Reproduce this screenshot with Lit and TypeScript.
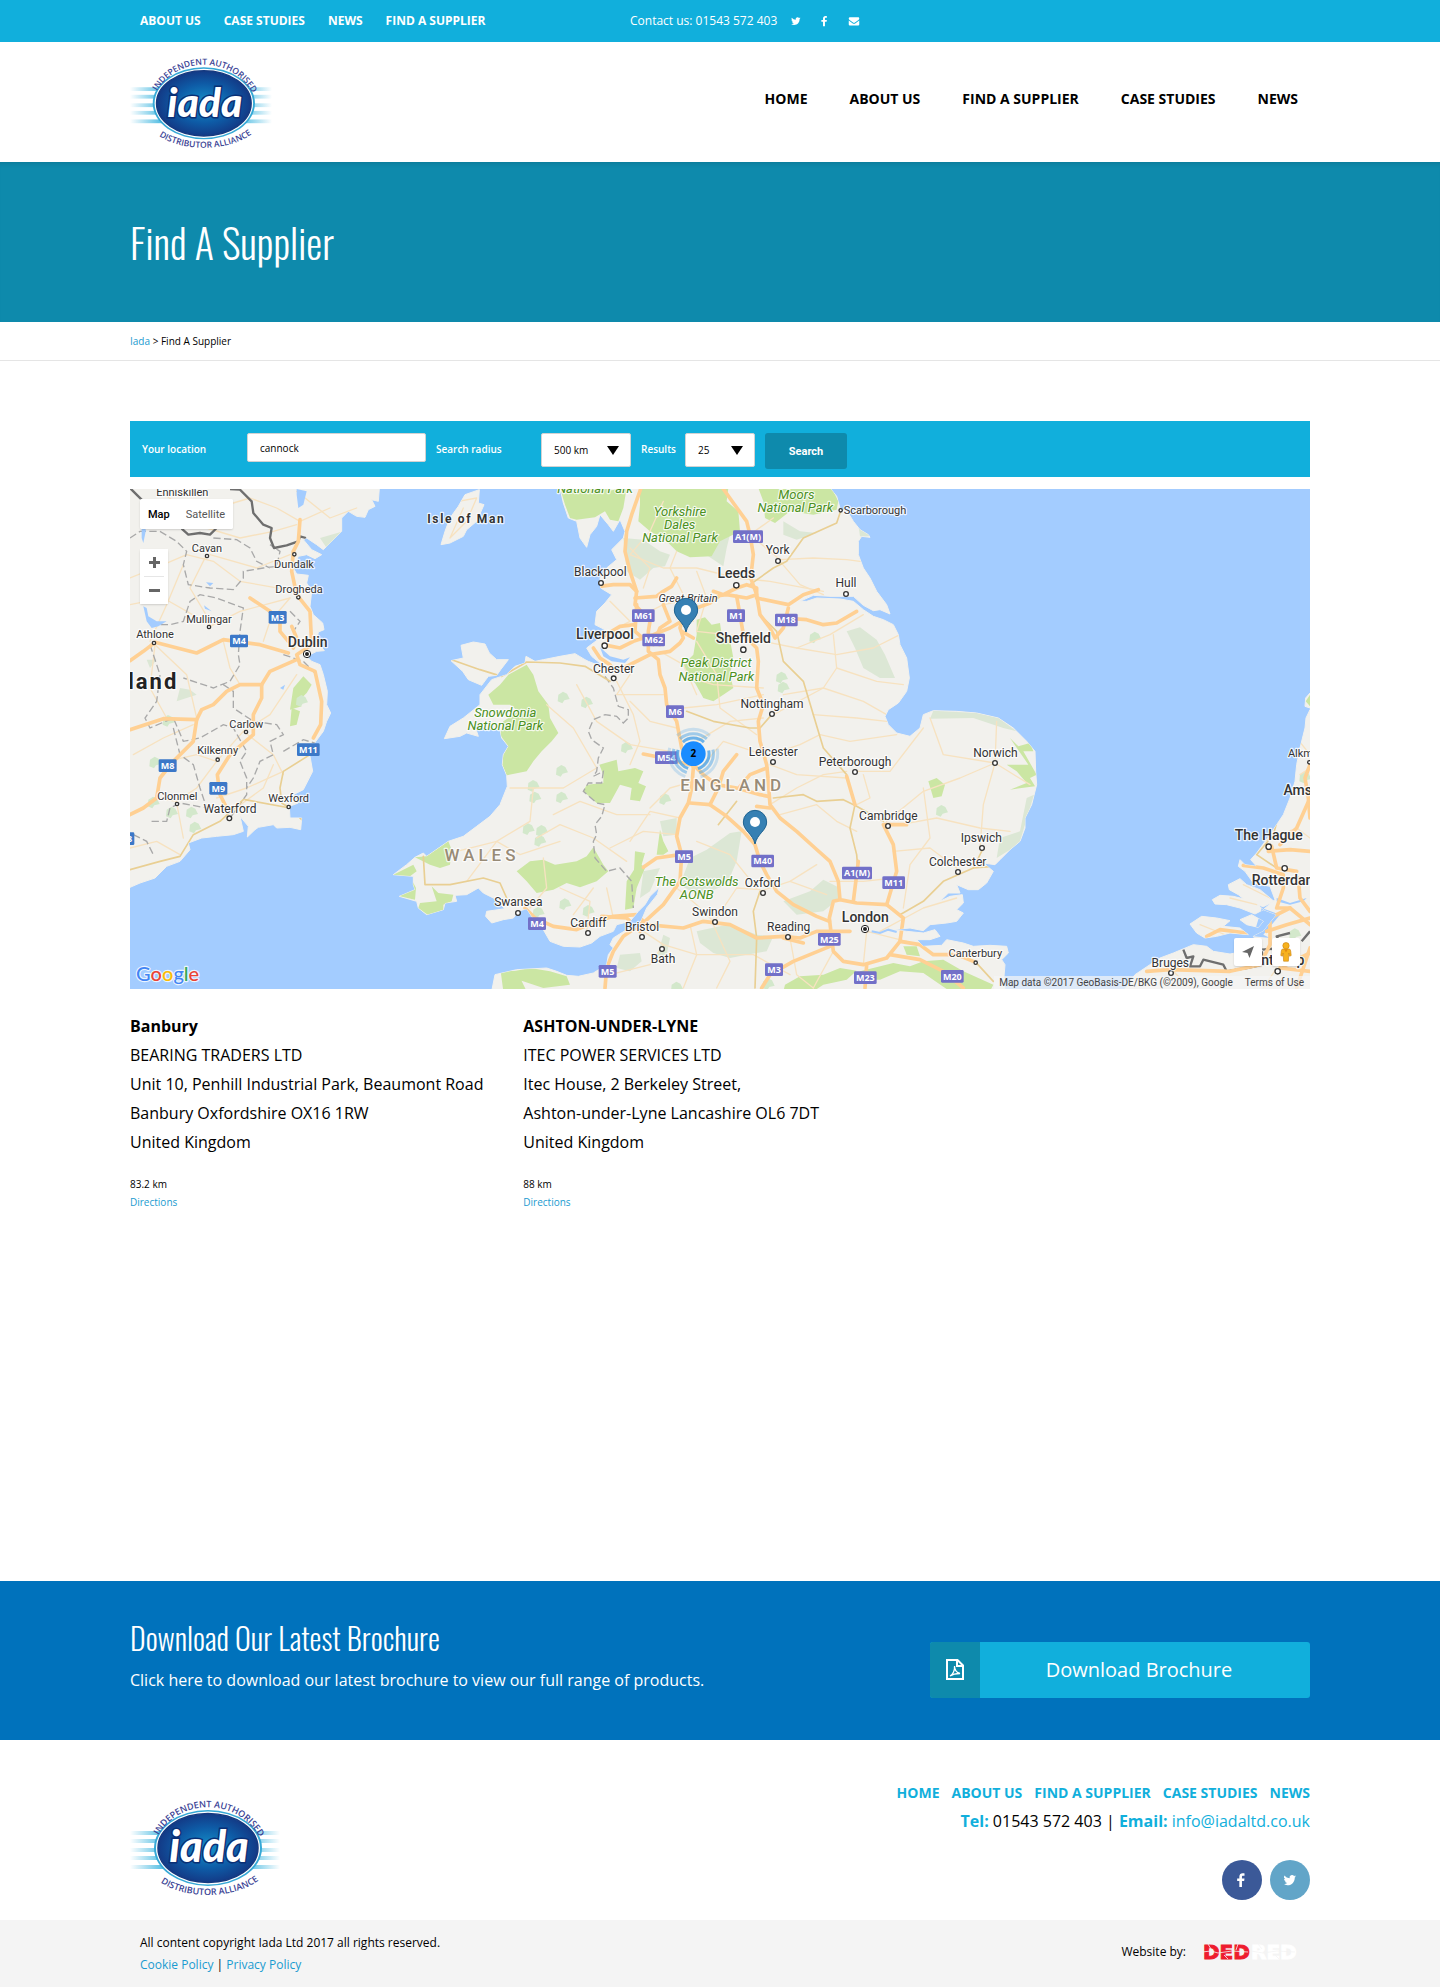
import { LitElement, html, svg, css } from 'lit';
import { customElement, property } from 'lit/decorators.js';

/* ---------- icons ---------- */
const TWITTER =
  'M28 8.6a10 10 0 0 1-2.5 2.6v.7c0 6.8-5.100 14.600-14.600 14.600A14.400 14.400 0 0 1 3 24.200a10.400 10.400 0 0 0 7.600-2.100 5.100 5.100 0 0 1-4.800-3.600 5.400 5.400 0 0 0 2.300-.1 5.100 5.100 0 0 1-4.100-5.100 5.100 5.100 0 0 0 2.300.7 5.100 5.100 0 0 1-1.600-6.900 14.600 14.600 0 0 0 10.600 5.400 5.100 5.100 0 0 1 8.800-4.700 10 10 0 0 0 3.300-1.300 5.100 5.100 0 0 1-2.300 2.900 10.300 10.300 0 0 0 2.900-.8z';
const FACEBOOK = 'M21 3v4.500h-2.700c-2 0-2.400 1-2.400 2.400V13H21l-.7 5h-4.400v12h-5.200V18H6.300v-5h4.400V9.300C10.700 5 13.400 2.700 17.200 2.700c1.800 0 3.400.1 3.800.3z';
const MAIL =
  'M2 9.500c0-2 1.200-3.500 3.200-3.500h21.600c1.800 0 3.200 1.500 3.200 3.200 0 2.100-1.600 4-3.200 5.100l-8.200 5.700c-1.100.8-1.700 1.200-2.600 1.200s-1.500-.4-2.600-1.200l-8.200-5.700C3.700 13.300 2 11.300 2 9.500zM2 14.700c.6.600 1.200 1.100 1.900 1.600l8 5.600c1.300.9 2.600 1.700 4.100 1.700s2.800-.8 4.100-1.700l8-5.600c.7-.5 1.300-1 1.900-1.600V25.500a2.800 2.800 0 0 1-2.800 2.800H4.800A2.800 2.800 0 0 1 2 25.500z';

const icon = (d: string) => html`<svg class="icon" viewBox="0 0 32 32" aria-hidden="true"><path d=${d} /></svg>`;

/* ---------- logo ---------- */
@customElement('iada-logo')
class IadaLogo extends LitElement {
  static styles = css`
    :host { display: block; }
    svg { display: block; width: 100%; height: auto; overflow: visible; }
    .ring { font: 600 9px 'Open Sans', sans-serif; fill: #3a3f94; }
    .word { font: italic 900 43px Lato, 'Open Sans', sans-serif; paint-order: stroke; }
  `;
  render() {
    return html`
      <svg viewBox="0 0 150 98" role="img" aria-label="iada">
        <defs>
          <radialGradient id="g"><stop offset="0" stop-color="#1593cb" /><stop offset=".6" stop-color="#0e5ba6" /><stop offset="1" stop-color="#133a86" /></radialGradient>
          <linearGradient id="l"><stop offset="0" stop-color="#2fb0dd" stop-opacity="0" /><stop offset=".2" stop-color="#2fb0dd" /><stop offset=".8" stop-color="#2fb0dd" /><stop offset="1" stop-color="#2fb0dd" stop-opacity="0" /></linearGradient>
          <path id="top" d="M25 45 C43 -3 114 -3 133 47" />
          <path id="bot" d="M25 80 C50 103 108 103 134 78" />
        </defs>
        ${[33, 41, 50, 58, 67].map((y) => svg`<rect x="0" y=${y} width="150" height="4" fill="url(#l)" opacity=".75" />`)}
        <ellipse cx="78" cy="50" rx="54" ry="38" fill="#35a8d6" />
        <ellipse cx="78" cy="50" rx="52" ry="36.500" fill="#fff" />
        <ellipse cx="78" cy="50" rx="50" ry="34.500" fill="url(#g)" stroke="#163a80" stroke-width="1.500" />
        <text class="word" x="79" y="64" text-anchor="middle" fill="#fff" stroke="#0a2f75" stroke-width="3">iada</text>
        <text class="ring"><textPath href="#top" startOffset="50%" text-anchor="middle">INDEPENDENT AUTHORISED</textPath></text>
        <text class="ring"><textPath href="#bot" startOffset="50%" text-anchor="middle">DISTRIBUTOR ALLIANCE</textPath></text>
      </svg>
    `;
  }
}

/* ---------- map ---------- */
/* Map units are thirds of a pixel, so the geometry stays in whole numbers. */
const WATER = '#a3ccff';

const LAND = [
  /* Ireland */
  'M0 0H748L745 40 725 35 735 55 715 65 705 88 680 85 655 70 635 90V130L600 165 580 185 560 170 530 150 520 155 545 185 575 200 555 212 530 200 505 205 490 240 500 258 535 262 530 285 545 310 540 355 550 380 578 405 582 425 565 432 560 460 583 488 560 490 530 505 545 520 570 530 580 560 592 610 590 650 602 675 590 700 580 730 550 770 540 805 548 850 520 905 490 920 505 945 478 955 480 990 515 990 512 1025 480 1018 440 1020 430 1010 385 1018 375 1025 352 1047 355 1015 330 985 340 1030 310 1040 260 1045 215 1050 175 1065 180 1085 150 1120 110 1135 75 1170 30 1185 0 1198Z',
  /* Isle of Man */
  'M1048 5 1005 20 985 55 960 90 945 130 933 170 960 165 1000 145 1010 125 1040 100 1062 50 1045 45Z',
  /* Anglesey */
  'M963 518 1000 510 993 472 1030 462 1065 468 1078 495 1100 515 1135 515 1112 545 1100 562 1075 565 1055 592 1015 575 998 550Z',
  /* Great Britain */
  'M1290 0 1300 45 1315 90 1340 100 1350 150 1370 178 1380 140 1400 115 1410 80 1435 110 1450 130 1470 95 1485 130 1480 150 1445 185 1460 215 1430 240 1410 270 1412 300 1445 320 1425 345 1400 370 1395 410 1425 425 1410 450 1370 480 1385 505 1410 525 1440 550 1400 530 1375 520 1365 515 1335 497 1290 505 1240 515 1215 520 1188 505 1185 525 1155 535 1130 560 1085 575 1050 620V650L1000 690 960 715 943 752 990 745 1010 735 1045 745 1035 715 1070 720 1110 725 1115 750 1135 775 1120 800 1117 830 1130 862 1132 895 1110 950 1080 985 1040 1015 1000 1045 955 1060 890 1105 880 1095 855 1108 830 1130 790 1160 850 1165V1190L855 1205 808 1225 860 1240 865 1260 890 1280 940 1265 945 1245 980 1240 975 1222 1010 1220 1045 1200 1060 1215 1090 1230 1125 1262 1070 1270 1067 1285 1085 1305 1120 1295 1150 1290 1165 1270 1190 1262 1205 1285 1240 1325 1260 1360 1300 1375 1350 1377 1385 1365 1410 1345 1450 1330 1460 1310 1500 1300 1525 1270 1545 1250 1560 1225 1588 1198 1582 1220 1550 1260 1535 1295 1520 1320 1490 1325 1450 1350 1440 1370 1450 1380 1435 1400 1430 1430 1390 1455 1345 1465 1310 1462 1280 1450 1250 1440 1160 1445 1095 1460 1085 1510H2625L2622 1465 2625 1430 2615 1415 2635 1395 2630 1375 2580 1372 2530 1375 2500 1365 2450 1355 2435 1372 2380 1375 2360 1355 2400 1355 2430 1345 2415 1325 2380 1335 2330 1330 2290 1325 2340 1320 2380 1328 2400 1310 2450 1305 2480 1300 2500 1275 2480 1265 2500 1245 2497 1220 2460 1225 2430 1240 2455 1215 2490 1215 2480 1190 2515 1205 2545 1205 2570 1185 2590 1150 2560 1125 2595 1130 2610 1115 2640 1085 2670 1060 2685 1020V990L2705 950 2720 890 2717 850 2715 790 2690 760 2650 720 2605 690 2540 675 2480 670 2410 668 2380 680 2370 720 2340 745 2300 735 2275 710 2265 685 2275 665 2305 645 2330 610 2338 570 2330 510 2310 470 2305 440 2290 410 2260 395 2230 385 2200 365 2170 340 2130 333 2060 330 2030 340 2010 340 2050 322 2100 325 2170 325 2200 352 2230 368 2250 365 2280 378 2270 350 2240 310 2220 270 2200 240 2185 200V160L2195 145 2220 148 2215 140 2190 125 2170 100 2155 75 2130 60 2120 25 2100 0Z',
  /* The Low Countries */
  'M3540 665 3528 690 3525 720 3510 780 3500 830 3495 880 3480 930 3460 980 3420 1040 3380 1095 3362 1115 3380 1135 3345 1130 3330 1115 3325 1135 3345 1150 3370 1185 3420 1195 3435 1235 3400 1265 3440 1280 3400 1330 3370 1345 3400 1390 3330 1392 3300 1398 3250 1390 3230 1375 3190 1370 3130 1395 3090 1410 3060 1430 3015 1460 2980 1510H3540Z',
  'M3247 1235 3270 1222 3310 1225 3370 1240 3400 1265 3375 1278 3330 1260 3290 1250 3255 1248Z',
  'M3295 1190 3330 1172 3350 1190 3390 1205 3432 1240 3400 1256 3350 1240 3325 1220 3298 1205Z',
  'M3180 1308 3215 1285 3260 1290 3300 1298 3280 1315 3330 1320 3355 1340 3300 1335 3260 1345 3225 1350 3200 1335Z',
  'M3330 1295 3365 1280 3400 1300 3385 1318 3350 1310Z',
  'M3525 655 3527 630 3540 615V660Z',
];

const PARKS = [
  'M1290 0H1490L1480 60 1465 100 1440 95 1425 70 1395 88 1340 95 1320 90 1305 50Z',
  'M1530 0H1795L1790 40 1825 70 1830 130 1770 160 1745 205 1680 208 1640 190 1610 160 1560 130 1525 100 1530 50Z',
  'M1885 0H2105L2125 40 2120 65 2050 80 1980 70 1935 105 1905 90 1900 40Z',
  'M1190 530 1210 560 1225 610 1255 650 1260 690 1285 735 1265 760 1235 790 1210 820 1190 850 1130 862 1117 830 1120 800 1135 775 1110 740 1120 700 1165 670 1140 650 1090 650 1075 620 1110 590 1135 560Z',
  'M1700 395 1725 388 1745 410 1770 405 1775 440 1800 455 1810 510 1800 560 1810 600 1780 620 1750 640 1720 630 1695 585 1670 560 1660 530 1690 500 1700 440Z',
  'M1160 1150 1200 1120 1240 1115 1275 1130 1340 1120 1370 1105 1390 1078 1420 1130 1435 1150 1400 1180 1350 1198 1310 1185 1270 1205 1220 1215 1190 1180Z',
  'M1408 830 1460 815 1465 850 1515 840 1540 850 1525 885 1548 895 1530 940 1500 935 1505 900 1470 890 1440 945 1400 945 1360 910 1370 890 1420 885 1420 860Z',
  'M1590 1025 1600 1060 1615 1090 1600 1100 1580 1100Z',
  'M1515 1090 1545 1095 1535 1130 1545 1140 1520 1200 1510 1260 1485 1265 1490 1180 1512 1145Z',
  'M855 1108 890 1105 955 1060 965 1085 960 1130 930 1140 900 1130ZM790 1160 850 1130 860 1150 840 1165 858 1200 855 1235 810 1225ZM905 1195 925 1215 970 1220 965 1240 940 1250 940 1265 895 1282 865 1260 870 1245 920 1240Z',
  'M520 565 545 590 530 615 505 640 515 655 480 665 490 600Z',
  'M485 660 510 670 500 710 480 715Z',
  'M2395 880 2420 870 2445 890 2435 925 2410 930Z',
  'M2640 750 2665 775 2700 765 2710 790 2680 790 2720 860 2700 870 2715 895 2640 905 2690 885 2660 850 2630 830 2695 830Z',
  'M1965 1490 2010 1465 2080 1460 2130 1440 2180 1448 2150 1475 2080 1490 2050 1510H1960ZM2190 1450 2290 1425 2340 1435 2380 1420 2440 1415 2500 1450 2590 1490 2580 1510H2460L2380 1455 2310 1450 2250 1475 2190 1475ZM2320 1375 2360 1375 2370 1405 2330 1400Z',
  'M1150 1450 1200 1440 1260 1450 1310 1465 1320 1490 1240 1500 1150 1470ZM1112 1450 1160 1448 1190 1510H1120Z',
  'M3527 640 3540 620V655Z',
];

const FAINT = [
  'M1480 150 1540 155 1590 190 1620 200 1605 235 1570 240 1530 275 1490 250Z',
  'M1735 205 1770 160 1800 130 1785 110 1810 100 1790 180 1780 235Z',
  'M2150 430 2190 418 2240 455 2265 500 2295 570 2250 570 2200 540 2175 480Z',
  'M1680 1110 1730 1085 1800 1035 1835 1030 1820 1120 1790 1190 1740 1210 1700 1220 1650 1190Z',
  'M1700 1330 1790 1310 1830 1320 1880 1340 1930 1345 1910 1390 1850 1400 1800 1410 1750 1395 1710 1365Z',
  'M1960 1240 2040 1210 2080 1175 2130 1200 2130 1230 2080 1270 2000 1280Z',
  'M1470 1400 1530 1395 1535 1420 1500 1450 1460 1440ZM1600 1340 1620 1350 1610 1400 1580 1410Z',
  'M1590 1000 1640 990 1640 1040 1600 1045ZM1540 1150 1590 1140 1560 1210 1530 1230Z',
  'M2410 668 2540 675 2605 690 2660 730 2620 720 2530 690 2400 692Z',
  'M2670 1060 2700 960 2712 920 2690 930 2670 1030 2610 1050 2600 1110 2640 1085Z',
  'M1960 100 2010 130 2060 135 2000 155 1960 140ZM2185 110 2220 145 2190 145Z',
  'M150 600 180 605 200 620 140 640ZM50 515 80 515 60 540ZM570 150 640 130 620 160 590 180Z',
];

const SPECKS: Array<[number, number]> = [
  [1285, 620], [1355, 635], [1280, 840], [1195, 885], [1200, 920], [1180, 1015], [1220, 1020], [1215, 1050], [1280, 920],
  [1475, 770], [1590, 925], [1290, 1240], [1360, 1260], [2040, 440], [1940, 560], [1945, 590], [2420, 960], [60, 815], [55, 935],
  [100, 690], [170, 965], [180, 1010], [110, 965], [1900, 1480], [1625, 1490], [500, 630], [3480, 1330], [3510, 860], [1210, 1265],
];

const INLETS = [
  'M1410 478 1440 505 1480 515 1500 508 1485 525 1445 520 1420 505Z',
  'M40 355 50 360 55 385 80 400 110 400 85 415 65 420 50 400ZM222 352 245 370 225 362ZM228 283 250 285 240 295ZM35 115 48 125 40 165 35 150ZM500 3 530 10 520 50 505 60 500 20ZM465 590 460 605 450 600Z',
  'M3440 1230 3480 1245 3530 1230 3520 1240 3480 1250 3440 1240ZM3395 1260 3450 1280 3400 1340 3420 1350 3370 1345Z',
];

const MOTORWAYS = [
  'M1532 3 1505 80 1490 130 1485 190 1500 250 1520 310 1515 350 1560 400 1555 430 1555 490 1585 515 1590 560 1605 600 1610 650 1640 700 1655 780 1680 800 1690 840 1685 900 1675 945 1650 990 1640 1045 1655 1100 1650 1180 1600 1250 1545 1300 1480 1345 1450 1390 1430 1440 1425 1500',
  'M1780 3 1810 45 1850 100 1860 140 1870 200 1862 270 1880 320 1890 380 1920 420 1935 450 1960 420 1975 360',
  'M1410 295 1450 290 1500 290 1520 310', 'M1515 330 1580 325 1600 310 1625 295 1640 270',
  'M1750 310 1780 320 1820 300 1850 290 1880 300 1880 320 1850 330 1790 320 1770 322 1740 345 1700 360 1660 380 1650 420 1660 450 1650 465 1620 490 1560 500 1510 525 1470 545',
  'M1820 325 1830 380 1840 440 1880 480 1885 520 1880 600 1900 650 1885 700 1890 760 1910 830 1915 880 1920 950 1950 990 2000 1030 2055 1080 2100 1120 2125 1180 2130 1235 2110 1240 2098 1290 2105 1350 2110 1390 2140 1420 2200 1430 2270 1410 2310 1360 2320 1290 2270 1250 2180 1245 2130 1235',
  'M1880 330 1975 350 2020 320 2065 305', 'M1960 390 2030 395 2080 410 2120 405 2180 370',
  'M1390 480 1410 510 1440 530 1450 545', 'M1420 470 1470 480 1510 460 1570 440 1620 420 1655 400', 'M1520 350 1515 430 1550 460 1590 470', 'M1420 445 1470 415 1515 410', 'M1600 350 1620 400 1590 420 1570 470', 'M1655 430 1690 450',
  'M1540 798 1600 810 1680 830', 'M1690 830 1720 860 1760 890 1820 900 1890 920 1915 925', 'M1820 800 1780 850 1765 900 1740 950 1680 945', 'M1740 950 1790 985 1840 1030 1875 1070 1890 1120 1910 1160 1940 1210 1990 1250 2060 1285 2098 1300',
  'M1830 895 1860 860 1910 840', 'M1880 955 1920 960', 'M1540 1138 1580 1110 1650 1100',
  'M1185 1260 1215 1290 1270 1315 1340 1325 1400 1300 1450 1285 1520 1280 1550 1310 1660 1320 1720 1300 1800 1310 1880 1350 1960 1345 2010 1350 2060 1330 2160 1330',
  'M1415 1285 1490 1290 1530 1330', 'M1960 1350 2020 1365', 'M1895 1500 1920 1460 1990 1420 2100 1375',
  'M2270 1250 2300 1150 2290 1070 2260 1010 2330 1010', 'M2170 1240 2185 1120', 'M2150 865 2175 950',
  'M2310 1360 2370 1370 2410 1400 2480 1400 2530 1420', 'M2280 1400 2370 1415 2440 1450 2500 1500', 'M2210 1430 2205 1500',
  'M360 330 420 370 450 400 450 430 475 460', 'M0 518 40 490 75 463 200 495 280 455 390 470 475 495', 'M0 725 100 692 200 695 215 665 250 650 290 610 330 590 395 590 420 550 500 515',
  'M200 695 190 760 130 820 90 870 80 930 40 960 0 980', 'M395 590 395 630 370 680 370 740 300 800 262 860 270 920 290 960', 'M490 190 485 250 500 320 540 370 545 470 500 500 510 530 555 550 575 640 572 710 550 750',
  'M510 95 505 160 490 190', 'M485 415 500 450 490 480',
  'M3540 830 3525 870 3535 930 3540 990', 'M3425 1075 3440 1140 3500 1150', 'M3415 1090 3480 1085 3540 1090', 'M3340 1132 3400 1140 3460 1160 3460 1200 3440 1260 3480 1260 3540 1310', 'M3505 1170 3510 1230 3540 1270', 'M3480 1260 3420 1290 3420 1370 3390 1430 3300 1450 3120 1445 3050 1450', 'M3230 1345 3270 1325 3350 1335', 'M3540 930 3500 1020 3450 1070', 'M3410 1330 3470 1310 3540 1290', 'M3540 1395 3450 1440 3540 1450', 'M3500 1500 3540 1380',
];

const ROADS = [
  'M965 515 1050 545 1115 565 1190 522 1290 525 1365 535 1440 580', 'M1860 290 1930 240 1970 220 2020 150 2120 105 2135 60', 'M1890 380 1940 430 1960 520 2020 580 2050 680 2080 780 2150 860', 'M1670 670 1750 700 1860 720 1890 720 1925 680',
  'M1930 930 2020 920 2060 940 2140 935 2180 955 2260 1000', 'M2175 950 2160 1020 2180 1100 2185 1160', 'M880 1105 885 1190 960 1190 1060 1170 1110 1185 1130 1230', 'M1765 1010 1820 940', 'M1890 1210 1870 1270 1880 1350 1875 1500', 'M2310 1280 2380 1240 2440 1180 2530 1140 2590 1135', 'M2530 1140 2560 1080', 'M2535 1420 2590 1480', 'M540 800 460 850 450 900 455 945 480 960 515 995', 'M345 935 480 960', 'M0 1145 90 1120 150 1105 190 1040 270 1000 340 935', 'M3460 930 3430 1040 3380 1100 3440 1140',
];

const MINOR = [
  'M1600 40 1560 130 1500 200 1600 240 1700 240 1820 270 1920 280 2080 310', 'M1930 90 1860 140 1950 215 2050 210 2150 215 2190 220', 'M1950 220 2010 290 2080 320', 'M1640 190 1620 240 1660 320 1690 400', 'M1700 250 1730 330 1700 430 1880 450',
  'M1900 460 2000 480 2100 440 2200 380', 'M2000 480 2120 500 2230 480 2310 440', 'M2110 440 2120 540 2080 600 1930 680', 'M2120 540 2240 580 2320 590', 'M1960 620 2080 600 2200 640 2270 680', 'M2050 680 2180 690 2270 700', 'M1920 800 2010 770 2070 740 2160 760 2300 740',
  'M2175 850 2280 850 2380 720', 'M2400 690 2440 800 2595 825 2700 890', 'M2595 825 2600 700', 'M2595 825 2490 870 2380 910 2270 1000', 'M2595 825 2560 950 2550 1080', 'M2310 1010 2420 990 2550 1020 2640 1030', 'M2380 900 2400 1050 2340 1130 2320 1260', 'M2480 1140 2400 1080 2290 1090', 'M2200 860 2220 930 2180 950',
  'M1920 830 2000 860 2150 870', 'M1920 950 2000 900 2080 860 2150 850', 'M1950 980 2060 950 2120 1000 2180 1030', 'M1890 1210 1980 1180 2060 1130', 'M1980 1180 2090 1220', 'M1760 1290 1820 1200 1890 1205', 'M1640 1200 1700 1250 1750 1300', 'M1700 1060 1800 1100 1880 1200', 'M1560 960 1620 900 1690 880', 'M1500 1060 1560 970 1650 990', 'M1440 1080 1540 1030 1640 1040', 'M1500 640 1560 700 1640 720', 'M1460 580 1510 680 1530 760 1500 830', 'M1340 590 1400 700 1500 770 1620 790', 'M1250 650 1330 720 1400 840 1300 900 1140 900', 'M1270 980 1350 940 1460 980 1560 980', 'M1220 1050 1290 1010 1390 1050 1490 1120', 'M1010 1180 1100 1060 1170 1100 1290 1060', 'M1210 900 1200 1000 1100 1060 980 1090', 'M1240 1110 1250 1200 1200 1260', 'M1290 1200 1380 1240 1370 1330', 'M1430 1200 1450 1290', 'M1390 1200 1330 1280', 'M1650 560 1750 590 1900 600', 'M1660 660 1760 650 1900 620', 'M1700 460 1760 560 1770 660 1880 740', 'M1700 760 1800 700 1900 690', 'M1720 830 1780 760 1900 800', 'M1540 1330 1600 1370 1700 1400 1870 1400 1980 1460', 'M1600 1370 1560 1430 1440 1460', 'M1680 1310 1700 1400 1660 1500', 'M1750 1310 1800 1420 1760 1500', 'M1980 1350 2000 1460 2050 1500', 'M2210 1330 2200 1430', 'M2210 1330 2330 1360', 'M2100 1180 2200 1180 2290 1170', 'M2110 1390 2050 1500', 'M2250 1330 2380 1260 2480 1230', 'M1500 180 1560 240 1540 300', 'M1440 340 1500 400 1420 440', 'M1540 380 1600 350 1700 330', 'M1590 490 1660 530 1700 620', 'M1500 560 1460 620 1600 620',
  'M80 3 160 60 230 120 330 150 430 130 500 110', 'M260 60 360 30 440 60 510 100 600 60', 'M500 10 600 90 680 60', 'M0 270 100 230 170 200 250 220 330 280 500 310', 'M60 460 110 350 160 230', 'M240 415 330 370 480 330', 'M0 350 100 330 240 410', 'M75 470 60 600 110 690', 'M75 470 170 560 200 690', 'M280 460 300 540 330 590', 'M10 800 100 750 190 710', 'M110 820 200 800 260 820 340 730', 'M260 820 200 900 140 940 80 930', 'M340 730 420 680 500 560', 'M340 730 430 800 460 860', 'M260 930 350 900 460 850', 'M0 1080 80 1060 150 1100', 'M140 945 160 1050', 'M290 980 400 900 430 830', 'M230 200 180 300 240 400', 'M480 330 420 400 400 460', 'M480 200 380 240 240 200',
  'M3400 1060 3500 1020 3540 1050', 'M3300 1230 3380 1250', 'M3340 1190 3420 1230', 'M3210 1310 3310 1350', 'M3120 1440 3180 1500', 'M3500 750 3540 800', 'M3510 860 3540 840', 'M3440 1440 3400 1500', 'M985 40 1040 30 1010 100 960 150 1000 60',
];

const COUNTY =
  'M1425 565 1450 600 1465 655 1495 665 1495 690 1480 705 1460 685 1425 680 1390 695 1375 730 1385 755 1420 780 1405 810 1400 850 1390 865 1420 850 1415 885 1375 885 1360 910 1400 945 1425 950 1415 985 1395 1010 1400 1040 1390 1060 1395 1110 1430 1150 1470 1140 1505 1180 1510 1260M0 150 30 130 90 130 140 160 170 190 160 230 175 290 240 300 310 305 340 270 340 250 400 240 440 235 450 190 420 170M250 150 320 155 360 180 380 220 420 240M60 410 120 410 160 400 180 340 210 320 260 330 340 360 330 430 325 500 330 530 300 580 250 600 160 570M60 470 90 560 80 640 45 690 60 720 130 690 160 760 210 750 280 710 310 720 350 790 330 820 350 870 350 920 300 990M130 720 150 800 190 830 210 900 230 960 150 945 120 960 110 1000 60 1000M280 590 310 610 310 660 370 700 440 710 460 740 420 760 430 800 390 820 370 870 350 900M460 790 520 755 570 770M480 370 510 400 490 430M10 1040 50 1060 70 1100M460 500 520 520 560 560';

const BORDER = 'M0 0 50 50M155 122 175 140 210 135 240 140 260 120M300 3 330 5 365 40 370 75 400 110 425 120 420 150 432 180 470 172 505 160 510 145 528 150M3160 1385 3170 1410 3190 1405 3180 1435 3210 1435 3220 1415 3280 1430 3290 1450 3350 1440 3400 1430 3395 1385 3460 1380 3440 1345 3480 1335M3515 1360 3540 1330';

type Place = [string, number, number, number, number];
/* name, label centre x, label baseline y, dot x, dot y */
const TOWNS: Place[] = [
  ['Blackpool', 1411, 264, 1413, 285], ['York', 1943, 199, 1944, 219], ['Hull', 2148, 298, 2148, 318], ['Chester', 1451, 556, 1451, 571],
  ['Nottingham', 1926, 661, 1926, 678], ['Leicester', 1930, 804, 1929, 822], ['Peterborough', 2175, 835, 2175, 852], ['Norwich', 2596, 807, 2595, 825],
  ['Cambridge', 2275, 997, 2274, 1014], ['Ipswich', 2554, 1063, 2556, 1080], ['Colchester', 2483, 1134, 2484, 1152], ['Oxford', 1898, 1197, 1899, 1215],
  ['Swindon', 1755, 1285, 1755, 1302], ['Bristol', 1536, 1330, 1536, 1347], ['Bath', 1599, 1426, 1596, 1383], ['Cardiff', 1375, 1317, 1374, 1335],
  ['Swansea', 1165, 1255, 1164, 1275], ['Reading', 1976, 1330, 1974, 1347], ['Waterford', 300, 975, 298, 991],
  ['Bruges', 3121, 1437, 3123, 1455],
];
const SMALL: Place[] = [
  ['Enniskillen', 157, 23, 0, 0], ['Cavan', 231, 191, 231, 204], ['Dundalk', 492, 239, 493, 199], ['Drogheda', 507, 314, 505, 328], ['Mullingar', 237, 404, 237, 417],
  ['Athlone', 75, 449, 72, 465], ['Carlow', 349, 719, 348, 732], ['Kilkenny', 263, 797, 263, 815], ['Clonmel', 142, 935, 141, 948],
  ['Wexford', 476, 941, 476, 957], ['Scarborough', 2235, 77, 2132, 67], ['Canterbury', 2536, 1406, 2537, 1424], ['Alkmaar', 3535, 808, 3538, 823],
];
const CITIES: Place[] = [
  ['Leeds', 1819, 270, 1819, 292], ['Liverpool', 1425, 453, 1424, 473], ['Sheffield', 1840, 465, 1840, 485], ['Dublin', 533, 477, 531, 498],
  ['London', 2206, 1302, 2205, 1323], ['The Hague', 3416, 1056, 3416, 1076], ['Rotterdam', 3464, 1191, 3464, 1141], ['Amsterdam', 3570, 922, 0, 0], ['Antwerp', 3445, 1431, 3443, 1450],
];
const NATURE: Array<[string, number, number]> = [
  ['National Park', 1395, 16], ['Yorkshire', 1650, 84], ['Dales', 1649, 122], ['National Park', 1650, 161], ['Moors', 1999, 33], ['National Park', 1996, 72],
  ['Snowdonia', 1126, 686], ['National Park', 1126, 725], ['Peak District', 1758, 538], ['National Park', 1759, 578], ['The Cotswolds', 1700, 1193], ['AONB', 1700, 1232],
];
const SHIELDS: Array<[string, number, number, string]> = [
  ['M3', 443, 388, 'ie'], ['M4', 327, 459, 'ie'], ['M11', 535, 785, 'ie'], ['M8', 113, 833, 'ie'], ['M9', 265, 901, 'ie'], ['M8', -14, 1052, 'ie'],
  ['A1(M)', 1854, 146, 'uk'], ['M61', 1540, 383, 'uk'], ['M1', 1818, 383, 'uk'], ['M18', 1969, 396, 'uk'], ['M62', 1571, 456, 'uk'], ['M6', 1635, 671, 'uk'],
  ['M54', 1609, 809, 'uk'], ['M5', 1662, 1106, 'uk'], ['M40', 1898, 1119, 'uk'], ['M4', 1221, 1307, 'uk'], ['M5', 1433, 1450, 'uk'], ['M25', 2098, 1354, 'uk'],
  ['A1(M)', 2181, 1155, 'uk'], ['M11', 2291, 1184, 'uk'], ['M3', 1932, 1445, 'uk'], ['M23', 2206, 1469, 'uk'], ['M20', 2467, 1465, 'uk'],
];

@customElement('supplier-map')
class SupplierMap extends LitElement {
  static styles = css`
    :host { display: block; position: relative; height: 500px; overflow: hidden; font-family: Roboto, 'Liberation Sans', sans-serif; }
    .chart { display: block; width: 100%; height: 100%; background: #a3ccff; }
    text { text-anchor: middle; paint-order: stroke; stroke: #fff; stroke-width: 7; stroke-opacity: .8; stroke-linejoin: round; fill: #333; }
    .town { font-size: 36px; }
    .small { font-size: 33px; }
    .city { font-size: 42px; font-weight: 500; }
    .nature { font-size: 39px; font-style: italic; fill: #4b9022; }
    .note { font-size: 33px; font-style: italic; }
    .island { font-size: 36px; font-weight: 700; letter-spacing: 5px; }
    .nation { font-size: 51px; font-weight: 500; letter-spacing: 12px; fill: #988b77; }
    .country { font-size: 66px; font-weight: 700; letter-spacing: 6px; fill: #222; text-anchor: start; }
    .shield { font: 700 27px 'Open Sans', sans-serif; fill: #fff; stroke: none; }
    .tally { font: 700 30px 'Open Sans', sans-serif; fill: #000; stroke: none; }
    .google { font: 500 60px Lato, sans-serif; text-anchor: start; }
    button { border: 0; padding: 0; background: #fff; font: inherit; cursor: pointer; color: #565656; }
    .modes, .zoom, .locate, .pegman { position: absolute; background: #fff; border-radius: 2px; box-shadow: 0 1px 2px rgba(0, 0, 0, .15); }
    .modes { left: 10px; top: 10px; display: flex; height: 30px; font-size: 11px; }
    .modes button { padding: 0 8px; border-radius: 2px; }
    .modes .on { color: #000; font-weight: 500; }
    .zoom { left: 10px; top: 60px; width: 28px; display: grid; grid-template-rows: 27px 1px 27px; }
    .zoom span { background: #e6e6e6; margin: 0 4px; }
    .zoom svg, .locate svg, .pegman svg { display: block; margin: auto; }
    .locate, .pegman { width: 28px; height: 28px; bottom: 23px; }
    .locate { right: 48px; }
    .pegman { right: 10px; }
    .legal { position: absolute; right: 0; bottom: 0; display: flex; gap: 12px; padding: 0 6px 0 5px; background: rgba(245, 245, 245, .7); font-size: 10px; line-height: 13px; color: #444; }
    .legal a { color: #444; text-decoration: none; }
  `;

  private places(list: Place[], cls: string, r: number) {
    return list.map(
      ([name, x, y, dx, dy]) => svg`
        ${dx ? svg`<circle cx=${dx} cy=${dy} r=${r} fill="#fff" stroke="#333" stroke-width="4" />` : ''}
        <text class=${cls} x=${x} y=${y}>${name}</text>`,
    );
  }

  private paths(list: string[], stroke: string, width: number) {
    return svg`<g fill="none" stroke=${stroke} stroke-width=${width} stroke-linejoin="round" stroke-linecap="round">${list.map((d) => svg`<path d=${d} />`)}</g>`;
  }

  private pin(x: number, y: number) {
    return svg`<g transform="translate(${x} ${y})">
      <path d="M0 0C-7-32-35-40-35-66A35 35 0 0 1 35-66C35-40 7-32 0 0Z" fill="#3680b3" stroke="#1f6391" stroke-width="3" />
      <circle cy="-66" r="15" fill="#fff" /></g>`;
  }

  private cluster(x: number, y: number) {
    const ring = (r: number, o: number) =>
      svg`<circle r=${r} fill="none" stroke="#4ba3e6" stroke-width="9" stroke-opacity=${o} pathLength="360" stroke-dasharray="84 36" transform="rotate(-132)" />`;
    return svg`<g transform="translate(${x} ${y})">${ring(47, 0.8)}${ring(60, 0.5)}${ring(73, 0.25)}
      <circle r="37" fill="#1a8cff" /><text class="tally" y="11">2</text></g>`;
  }

  render() {
    return html`
      <svg class="chart" viewBox="0 3 3540 1500" preserveAspectRatio="xMidYMid slice" role="img" aria-label="Map of suppliers">
        <defs><clipPath id="land">${LAND.map((d) => svg`<path d=${d} />`)}</clipPath></defs>
        <g fill="#f2f1ed" stroke="#f2f1ed" stroke-width="3" stroke-linejoin="round">${LAND.map((d) => svg`<path d=${d} />`)}</g>
        <g clip-path="url(#land)">
          <g fill="#dce7d5">${FAINT.map((d) => svg`<path d=${d} />`)}</g>
          <g fill="#cbe6a3">${PARKS.map((d) => svg`<path d=${d} />`)}</g>
          <g fill="#d3e8cb">${SPECKS.map(([x, y]) => svg`<path d="M${x} ${y}l14-9 12 6 8 16-16 4-6 9-14-6z" />`)}</g>
          ${this.paths(MINOR, '#f7e2c0', 4)}
          <path d=${COUNTY} fill="none" stroke="#a9a9a9" stroke-width="4" stroke-dasharray="22 10" />
          <path d=${BORDER} fill="none" stroke="#6e6e6e" stroke-width="7" stroke-linejoin="round" />
          <g fill=${WATER}>${INLETS.map((d) => svg`<path d=${d} />`)}</g>
          ${this.paths(ROADS, '#e9cf93', 5)}
          ${this.paths(MOTORWAYS, '#ffd093', 11)}
        </g>
        <path d="M2225 1330 2250 1335 2275 1325 2300 1332" fill="none" stroke=${WATER} stroke-width="6" />
        <text class="island" x="1009" y="105">Isle of Man</text>
        <text class="nation" x="1056" y="1119">WALES</text>
        <text class="nation" x="1808" y="909">ENGLAND</text>
        <text class="country" x="-6" y="603">land</text>
        <text class="note" x="1674" y="341">Great Britain</text>
        ${NATURE.map(([t, x, y]) => svg`<text class="nature" x=${x} y=${y}>${t}</text>`)}
        ${this.places(SMALL, 'small', 5)} ${this.places(TOWNS, 'town', 7)} ${this.places(CITIES, 'city', 8)}
        ${[[531, 498], [2205, 1323]].map(([x, y]) => svg`<circle cx=${x} cy=${y} r="11" fill="#fff" stroke="#222" stroke-width="3" /><circle cx=${x} cy=${y} r="6" fill="#222" />`)}
        ${SHIELDS.map(([t, x, y, k]) => {
          const w = t.length > 3 ? 90 : t.length > 2 ? 68 : 54;
          return svg`<rect x=${x - w / 2} y=${y - 19} width=${w} height="38" rx="4" fill=${k === 'ie' ? '#3c78c8' : '#7270c8'} />
            <text class="shield" x=${x} y=${y + 10}>${t}</text>`;
        })}
        ${this.cluster(1690, 797)} ${this.pin(1668, 432)} ${this.pin(1875, 1068)}
        <text class="google" x="18" y="1480"><tspan fill="#4285f4">G</tspan><tspan fill="#ea4335">o</tspan><tspan fill="#fbbc05">o</tspan><tspan fill="#4285f4">g</tspan><tspan fill="#34a853">l</tspan><tspan fill="#ea4335">e</tspan></text>
      </svg>
      <div class="modes"><button class="on" type="button">Map</button><button type="button">Satellite</button></div>
      <div class="zoom">
        <button type="button" aria-label="Zoom in"><svg width="11" height="11" viewBox="0 0 11 11"><path d="M4 0h3v4h4v3H7v4H4V7H0V4h4z" fill="#666" /></svg></button>
        <span></span>
        <button type="button" aria-label="Zoom out"><svg width="11" height="3" viewBox="0 0 11 3"><path d="M0 0h11v3H0z" fill="#666" /></svg></button>
      </div>
      <button class="locate" type="button" aria-label="My location"><svg width="12" height="12" viewBox="0 0 12 12"><path d="M12 0 7.500 12 5.500 7 0 6z" fill="#666" /></svg></button>
      <button class="pegman" type="button" aria-label="Street View">
        <svg width="12" height="20" viewBox="0 0 12 20"><path d="M3 7h6q1.500 0 1.700 2l.5 4.500-1.600.7-.8-3.200-.4 8.200H3.600L3.200 11l-.8 3.200-1.600-.7L1.300 9Q1.500 7 3 7z" fill="#f7b21d" stroke="#c98211" stroke-width=".6" /><circle cx="6" cy="3.700" r="3.200" fill="#f7b21d" stroke="#c98211" stroke-width=".6" /><path d="M4.200 7.300h3.600L6 10.500z" fill="#e08a10" /></svg>
      </button>
      <div class="legal"><span>Map data ©2017 GeoBasis-DE/BKG (©2009), Google</span><a href="#terms">Terms of Use</a></div>
    `;
  }
}

/* ---------- supplier entry ---------- */
interface Supplier { town: string; lines: string[]; distance: string; }

@customElement('supplier-entry')
class SupplierEntry extends LitElement {
  @property({ attribute: false }) supplier!: Supplier;
  static styles = css`
    :host { display: block; }
    address { font-style: normal; font-size: 16px; line-height: 29px; }
    strong, span { display: block; }
    .meta { margin: 18px 0 0; font-size: 10px; line-height: 18px; }
    a { display: block; color: #1a9bd0; text-decoration: none; }
  `;
  render() {
    const s = this.supplier;
    return html`<address><strong>${s.town}</strong>${s.lines.map((l) => html`<span>${l}</span>`)}</address>
      <p class="meta">${s.distance}<a href="#directions">Directions</a></p>`;
  }
}

const SUPPLIERS: Supplier[] = [
  { town: 'Banbury', lines: ['BEARING TRADERS LTD', 'Unit 10, Penhill Industrial Park, Beaumont Road', 'Banbury Oxfordshire OX16 1RW', 'United Kingdom'], distance: '83.2 km' },
  { town: 'ASHTON-UNDER-LYNE', lines: ['ITEC POWER SERVICES LTD', 'Itec House, 2 Berkeley Street,', 'Ashton-under-Lyne Lancashire OL6 7DT', 'United Kingdom'], distance: '88 km' },
];
const TOP_LINKS = ['ABOUT US', 'CASE STUDIES', 'NEWS', 'FIND A SUPPLIER'];
const MAIN_LINKS = ['HOME', 'ABOUT US', 'FIND A SUPPLIER', 'CASE STUDIES', 'NEWS'];
const href = (t: string) => '#' + t.toLowerCase().replace(/ /g, '-');

/* ---------- page ---------- */
@customElement('app-root')
class AppRoot extends LitElement {
  static styles = css`
    :host { display: block; background: #fff; color: #000; font-family: 'Open Sans', 'Liberation Sans', sans-serif; }
    * { box-sizing: border-box; }
    a { color: inherit; text-decoration: none; }
    h1, h2, p { margin: 0; }
    h1, h2 { font-family: Oswald, 'Liberation Sans Narrow', 'Open Sans', sans-serif; font-weight: 300; }
    .wrap { max-width: 1180px; margin: 0 auto; }
    .icon { display: block; width: 12px; height: 12px; fill: currentColor; }

    .topbar { background: #11afdc; color: #fff; font-size: 12px; line-height: 42px; }
    .topbar .wrap { display: grid; grid-template-columns: 500px 1fr; }
    .toplinks { display: flex; gap: 23px; padding-left: 10px; font-weight: 700; }
    .contact { display: flex; align-items: center; }
    .contact span { margin-right: 13px; }
    .contact a { margin-right: 17px; }

    .header { display: flex; justify-content: space-between; align-items: center; height: 120px; }
    .header iada-logo { width: 142px; }
    .mainnav { display: flex; gap: 42px; padding: 0 12px 6px 0; font-size: 14px; font-weight: 700; line-height: 20px; }

    .banner { background: #0e8aac; color: #fff; box-shadow: inset 0 5px 5px -4px rgba(0, 0, 0, .15); }
    .banner h1 { padding: 52px 0; font-size: 40px; line-height: 56px; }
    .crumbs { border-bottom: 1px solid #e5e5e5; font-size: 10px; line-height: 38px; }
    .crumbs a { color: #1a9bd0; }

    .search { display: flex; align-items: flex-start; margin: 60px 0 12px; padding: 12px 12px 8px; background: #11afdc; color: #fff; font-size: 10px; font-weight: 600; }
    .search label { line-height: 32px; }
    .wide { width: 105px; }
    .narrow { width: 44px; }
    .search input, .search select { border: 1px solid #d2d2d2; border-radius: 2px; background: #fff; color: #000; font: 400 10px 'Open Sans', sans-serif; margin: 0; }
    .search input { width: 179px; height: 29px; padding: 0 12px; margin-right: 10px; }
    .pick { display: grid; align-items: center; margin-right: 10px; height: 34px; }
    .pick > * { grid-area: 1 / 1; }
    .pick svg { justify-self: end; margin-right: 12px; pointer-events: none; z-index: 1; }
    .search select { appearance: none; height: 34px; padding: 0 12px; }
    .search .radius { width: 90px; }
    .search .count { width: 70px; }
    .search button { width: 82px; height: 36px; border: 0; border-radius: 3px; background: #0e8aac; color: #fff; font: 700 11px Roboto, sans-serif; }

    .results { display: grid; grid-template-columns: repeat(3, 1fr); align-items: start; min-height: 592px; padding-top: 23px; }

    .cta { background: #0072bc; color: #fff; }
    .cta .wrap { display: flex; justify-content: space-between; align-items: center; height: 159px; }
    .cta h2 { font-size: 30px; line-height: 44px; }
    .cta p { font-size: 16px; line-height: 28px; padding-top: 6px; }
    .cta .copy { padding-bottom: 12px; }
    .download { display: grid; grid-template-columns: 50px 330px; align-items: center; height: 56px; margin-top: 18px; border-radius: 3px; overflow: hidden; background: #11afdc; font-size: 20px; text-align: center; }
    .download i { display: grid; place-items: center; height: 56px; background: #0e8aac; }
    .download svg { display: block; }
    .download span { padding-right: 12px; }

    .foot { display: flex; justify-content: space-between; align-items: flex-start; height: 180px; padding-top: 39px; }
    .foot iada-logo { width: 150px; margin-top: 19px; }
    .foot .side { display: flex; flex-direction: column; align-items: flex-end; }
    .footnav { display: flex; gap: 12px; color: #11afdc; font-size: 14px; font-weight: 700; line-height: 28px; }
    .tel { font-size: 16px; line-height: 28px; }
    .tel strong, .tel a { color: #11afdc; }
    .social { display: flex; gap: 8px; margin-top: 25px; }
    .social a { display: grid; place-items: center; width: 40px; height: 40px; border-radius: 50%; color: #fff; }
    .social .icon { width: 16px; height: 16px; }
    .fb { background: #3b5998; }
    .tw { background: #62a5c8; }

    .legal { background: #f4f4f4; font-size: 12px; line-height: 22px; }
    .legal .wrap { display: flex; justify-content: space-between; align-items: center; height: 67px; padding: 0 10px; }
    .legal a { color: #1a9bd0; }
    .credit { display: flex; align-items: center; gap: 16px; padding-bottom: 4px; }
    .credit svg { display: block; }
    .ded { font: 700 20px 'DejaVu Sans', sans-serif; stroke-width: 1; }
  `;

  render() {
    const arrow = html`<svg width="12" height="9" viewBox="0 0 12 9" aria-hidden="true"><path d="M0 0h12L6 9z" /></svg>`;
    return html`
      <div class="topbar"><div class="wrap">
        <nav class="toplinks">${TOP_LINKS.map((t) => html`<a href=${href(t)}>${t}</a>`)}</nav>
        <div class="contact"><span>Contact us: 01543 572 403</span>
          <a href="#twitter" aria-label="Twitter">${icon(TWITTER)}</a><a href="#facebook" aria-label="Facebook">${icon(FACEBOOK)}</a><a href="#email" aria-label="Email">${icon(MAIL)}</a>
        </div>
      </div></div>
      <header class="wrap header">
        <iada-logo></iada-logo>
        <nav class="mainnav">${MAIN_LINKS.map((t) => html`<a href=${href(t)}>${t}</a>`)}</nav>
      </header>
      <div class="banner"><h1 class="wrap">Find A Supplier</h1></div>
      <div class="crumbs"><div class="wrap"><a href="#home">Iada</a> &gt; Find A Supplier</div></div>

      <main class="wrap">
        <form class="search" @submit=${(e: Event) => e.preventDefault()}>
          <label class="wide" for="place">Your location</label><input id="place" type="text" value="cannock" />
          <label class="wide" for="radius">Search radius</label>
          <div class="pick"><select id="radius" class="radius"><option>500 km</option></select>${arrow}</div>
          <label class="narrow" for="count">Results</label>
          <div class="pick"><select id="count" class="count"><option>25</option></select>${arrow}</div>
          <button type="submit">Search</button>
        </form>
        <supplier-map></supplier-map>
        <section class="results">${SUPPLIERS.map((s) => html`<supplier-entry .supplier=${s}></supplier-entry>`)}</section>
      </main>

      <section class="cta"><div class="wrap">
        <div class="copy"><h2>Download Our Latest Brochure</h2><p>Click here to download our latest brochure to view our full range of products.</p></div>
        <a class="download" href="#brochure">
          <i><svg width="18" height="21" viewBox="0 0 18 21" fill="none" stroke="#fff" stroke-width="2" aria-hidden="true"><path d="M1 1h10.500L17 6.500V20H1zM11 1v6h6" /><path d="M4 17c3-1.500 5-6 4.500-10 0 4 2 6.500 5.500 7.500-3 0-7 .5-10 2.500z" stroke-width="1.300" /></svg></i>
          <span>Download Brochure</span>
        </a>
      </div></section>

      <footer>
        <div class="wrap foot">
          <iada-logo></iada-logo>
          <div class="side">
            <nav class="footnav">${MAIN_LINKS.map((t) => html`<a href=${href(t)}>${t}</a>`)}</nav>
            <p class="tel"><strong>Tel:</strong> 01543 572 403 | <strong>Email:</strong> <a href="mailto:info@iadaltd.co.uk">info@iadaltd.co.uk</a></p>
            <div class="social"><a class="fb" href="#facebook" aria-label="Facebook">${icon(FACEBOOK)}</a><a class="tw" href="#twitter" aria-label="Twitter">${icon(TWITTER)}</a></div>
          </div>
        </div>
        <div class="legal"><div class="wrap">
          <p>All content copyright Iada Ltd 2017 all rights reserved.<br /><a href="#cookies">Cookie Policy</a> | <a href="#privacy">Privacy Policy</a></p>
          <div class="credit"><span>Website by:</span>
            <svg width="98" height="28" viewBox="0 0 98 28" role="img" aria-label="DEDRED">
              <text class="ded" x="1" y="21" fill="#ee1c2e" stroke="#ee1c2e">DED</text><text class="ded" x="49" y="21" fill="#fff" stroke="#fff">RED</text>
              <path d="M0 14 9 13l7 2 14-2 16 1M6 6l3 5M22 17l4 4M36 6l-2 6M49 13l12 2 14-2 18 1M56 6l4 5M73 17l4 4" fill="none" stroke="#f4f4f4" stroke-width=".8" />
            </svg>
          </div>
        </div></div>
      </footer>
    `;
  }
}
